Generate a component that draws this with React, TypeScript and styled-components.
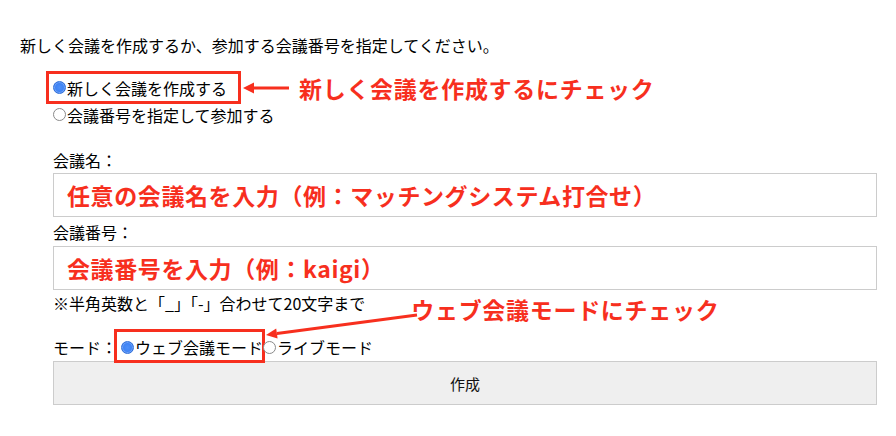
import styled, { createGlobalStyle } from 'styled-components';

const RED = '#f72f1e';

const GlobalStyle = createGlobalStyle`
  body {
    margin: 0;
    background: #fff;
    color: #000;
    font-family: 'Noto Sans CJK JP', 'Noto Sans', sans-serif;
    font-size: 16px;
  }
`;

const Page = styled.div`
  position: relative;
  width: 896px;
  height: 436px;
  padding: 33px 0 0 20px;
  box-sizing: border-box;
`;

const Intro = styled.p`
  margin: 0;
  line-height: 24px;
`;

const Form = styled.div`
  margin: 17px 0 0 33px;
  width: 824px;
`;

const ChoiceRow = styled.div`
  display: flex;
  align-items: center;
  height: 27px;
`;

const Choice = styled.label<{ $box?: string }>`
  position: relative;
  display: flex;
  align-items: center;
  height: 100%;
  white-space: nowrap;

  ${(p) =>
    p.$box &&
    `
    &::after {
      content: '';
      position: absolute;
      inset: ${p.$box};
      border: 3px solid ${RED};
      pointer-events: none;
    }
  `}
`;

const Radio = styled.input.attrs({ type: 'radio' })`
  appearance: none;
  width: 13px;
  height: 13px;
  margin: 0 1px 0 0;
  border-radius: 50%;
  border: 1px solid #8a8a8a;
  background: #fff;
  box-sizing: border-box;
  flex-shrink: 0;

  &:checked {
    border-color: #2f6fd8;
    background: radial-gradient(circle, #4d8ff8 0, #3479f2 100%);
    box-shadow: inset 0 0 0 1px rgba(255, 255, 255, 0.25);
  }
`;

const Annotation = styled.span<{ $shift?: number }>`
  color: ${RED};
  font-size: 23px;
  font-weight: 700;
  letter-spacing: 0.7px;
  white-space: nowrap;
  position: relative;
  top: ${(p) => p.$shift ?? 0}px;
`;

const InlineArrow = styled.svg`
  margin: 0 10px 0 16px;
  flex-shrink: 0;
`;

const FieldLabel = styled.div<{ $gap: number }>`
  margin-top: ${(p) => p.$gap}px;
  line-height: 24px;
`;

const Field = styled.input.attrs({ type: 'text', readOnly: true })<{ $gap: number }>`
  display: block;
  margin-top: ${(p) => p.$gap}px;
  width: 100%;
  height: 44px;
  box-sizing: border-box;
  border: 1px solid #cccccc;
  padding: 0 12px 0 13px;
  font-family: inherit;
  font-size: 23px;
  font-weight: 700;
  letter-spacing: 0.6px;
  color: ${RED};
  outline: none;
`;

const NoteRow = styled.div`
  display: flex;
  align-items: center;
  margin-top: 1px;
  height: 24px;
  white-space: nowrap;
`;

const NoteAnnotation = styled(Annotation)`
  margin-left: 46px;
`;

const ModeRow = styled.div`
  display: flex;
  align-items: center;
  margin-top: 20px;
  height: 24px;
`;

const ModeLabel = styled.span`
  margin-right: 4px;
`;

const SubmitButton = styled.button`
  display: block;
  margin-top: 2px;
  width: 100%;
  height: 44px;
  background: #efefef;
  border: 1px solid #cccccc;
  font-family: inherit;
  font-size: 15px;
  color: #111;
`;

const Overlay = styled.svg`
  position: absolute;
  top: 0;
  left: 0;
  pointer-events: none;
`;

export default function App() {
  return (
    <>
      <GlobalStyle />
      <Page>
        <Intro>新しく会議を作成するか、参加する会議番号を指定してください。</Intro>
        <Form>
          <ChoiceRow>
            <Choice $box="-3px -14px -3px -7px">
              <Radio name="kind" defaultChecked />
              新しく会議を作成する
            </Choice>
            <InlineArrow width="46" height="14" viewBox="0 0 46 14">
              <line x1="9" y1="7" x2="46" y2="7" stroke={RED} strokeWidth="3" />
              <polygon points="0,7 11,1.5 11,12.5" fill={RED} />
            </InlineArrow>
            <Annotation>新しく会議を作成するにチェック</Annotation>
          </ChoiceRow>
          <ChoiceRow>
            <Choice>
              <Radio name="kind" />
              会議番号を指定して参加する
            </Choice>
          </ChoiceRow>

          <FieldLabel $gap={20}>会議名：</FieldLabel>
          <Field $gap={1} defaultValue="任意の会議名を入力（例：マッチングシステム打合せ）" />
          <FieldLabel $gap={3}>会議番号：</FieldLabel>
          <Field $gap={2} defaultValue="会議番号を入力（例：kaigi）" />

          <NoteRow>
            ※半角英数と「_」「-」合わせて20文字まで
            <NoteAnnotation $shift={6}>ウェブ会議モードにチェック</NoteAnnotation>
          </NoteRow>

          <ModeRow>
            <ModeLabel>モード：</ModeLabel>
            <Choice $box="-6px -2px -4px -7px">
              <Radio name="mode" defaultChecked />
              ウェブ会議モード
            </Choice>
            <Choice>
              <Radio name="mode" />
              ライブモード
            </Choice>
          </ModeRow>

          <SubmitButton>作成</SubmitButton>
        </Form>

        <Overlay width="896" height="436" viewBox="0 0 896 436">
          <line x1="417" y1="315" x2="276.9" y2="333.6" stroke={RED} strokeWidth="3" />
          <polygon points="266,335 277.6,338.5 276.2,328.6" fill={RED} />
        </Overlay>
      </Page>
    </>
  );
}
